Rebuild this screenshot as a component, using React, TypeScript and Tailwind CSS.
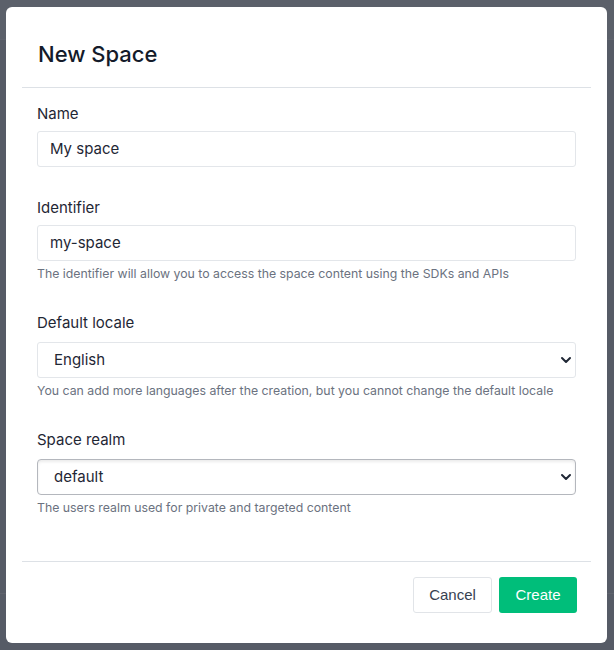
import { ChevronDown } from 'lucide-react'

const fields = [
  { label: 'Name', value: 'My space', kind: 'input', help: '' },
  {
    label: 'Identifier',
    value: 'my-space',
    kind: 'input',
    help: 'The identifier will allow you to access the space content using the SDKs and APIs',
  },
  {
    label: 'Default locale',
    value: 'English',
    kind: 'select',
    help: 'You can add more languages after the creation, but you cannot change the default locale',
  },
  {
    label: 'Space realm',
    value: 'default',
    kind: 'native',
    help: 'The users realm used for private and targeted content',
  },
]

export default function App() {
  return (
    <div className="relative h-[650px] w-[614px] overflow-hidden bg-[#565b66] font-['Inter',sans-serif]">
      {/* page behind the overlay */}
      <div className="h-[40px] border-b border-[#5f636d] bg-[#5b606a]"></div>
      <div className="absolute bottom-0 left-0 right-0 h-[57px] border-t border-[#5f636d]"></div>

      {/* modal */}
      <div className="absolute left-[6px] top-[7px] flex h-[636px] w-[601px] flex-col rounded-[6px] bg-white">
        <div className="px-[32px] pb-[19px] pt-[33px]">
          <h2 className="text-[22px] font-medium leading-[28px] text-[#141b2a]">New Space</h2>
        </div>
        <div className="mx-[16px] border-t border-[#dde1e6]"></div>

        <div className="flex flex-1 flex-col gap-[31px] px-[31px] pt-[16px]">
          {fields.map((f) => (
            <div key={f.label}>
              <label className="block text-[15px] leading-[20px] text-[#1f2735]">{f.label}</label>
              {f.kind === 'input' && (
                <div className="mt-[7px] flex h-[36px] items-center rounded-[3px] border border-[#e3e6ea] px-[12px] text-[15px] text-[#1f2735]">
                  {f.value}
                </div>
              )}
              {f.kind === 'select' && (
                <div className="mt-[9px] flex h-[36px] items-center justify-between rounded-[3px] border border-[#e3e6ea] pl-[16px] pr-[1px] text-[15px] text-[#1f2735]">
                  <span>{f.value}</span>
                  <ChevronDown size={16} strokeWidth={3} className="text-[#1f2735]" />
                </div>
              )}
              {f.kind === 'native' && (
                <div className="mt-[9px] flex h-[36px] items-center justify-between rounded-[4px] border border-[#b4b7bd] pl-[16px] pr-[1px] text-[15px] text-[#1f2735] shadow-[inset_0_2px_3px_rgba(0,0,0,0.08)]">
                  <span>{f.value}</span>
                  <ChevronDown size={16} strokeWidth={3} className="text-[#1f2735]" />
                </div>
              )}
              {f.help && (
                <p className="mt-[5px] text-[12.3px] leading-[16px] text-[#6b7280]">{f.help}</p>
              )}
            </div>
          ))}
        </div>

        <div className="mx-[16px] border-t border-[#dde1e6]"></div>
        <div className="flex justify-end gap-[7px] px-[30px] pb-[30px] pt-[15px] font-['Liberation_Sans',sans-serif]">
          <button className="h-[36px] w-[79px] rounded-[3px] border border-[#e1e4e8] bg-white text-[15px] text-[#374151]">
            Cancel
          </button>
          <button className="h-[36px] w-[78px] rounded-[3px] bg-[#00be7a] text-[15px] text-white">
            Create
          </button>
        </div>
      </div>
    </div>
  )
}
